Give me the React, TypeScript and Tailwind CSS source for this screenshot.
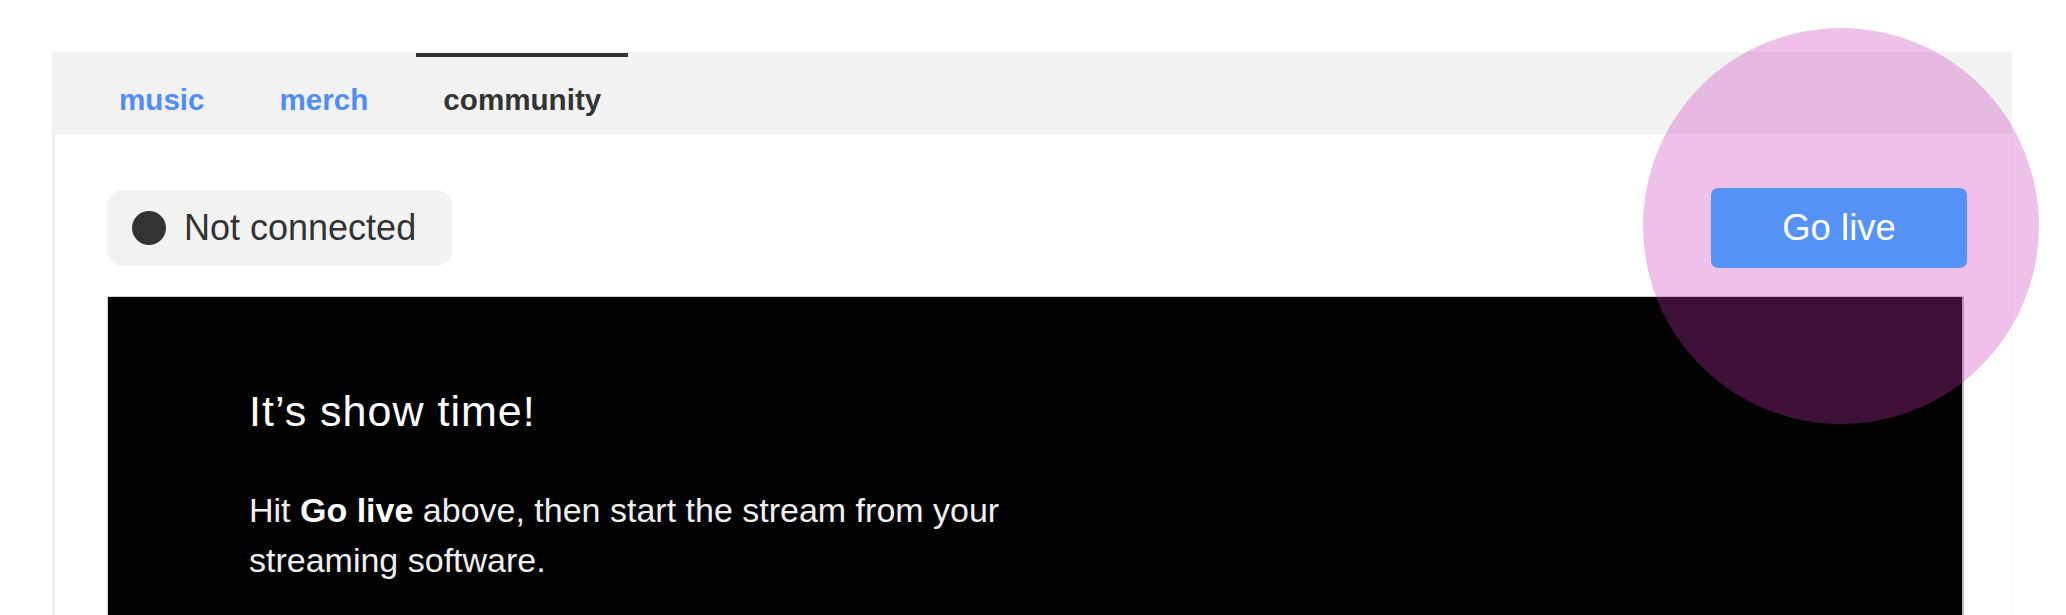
import React from 'react'

const tabs = [
  { label: 'music', active: false },
  { label: 'merch', active: false },
  { label: 'community', active: true },
]

function TabBar() {
  return (
    <div className="flex h-[82px] gap-[21px] bg-[#f2f2f2] pl-[40px]">
      {tabs.map((tab) => (
        <div
          key={tab.label}
          className={`relative px-[27px] pt-[31px] text-[29.6px] font-bold leading-[33px] ${
            tab.active ? 'text-[#333333]' : 'text-[#4f8ef7]'
          }`}
        >
          {tab.active && <div className="absolute left-0 right-0 top-[1px] h-[4px] bg-[#333333]" />}
          {tab.label}
        </div>
      ))}
    </div>
  )
}

function StatusPill() {
  return (
    <div className="flex h-[76px] items-center gap-[18px] rounded-[16px] bg-[#f2f2f2] pl-[25px] pr-[36px]">
      <div className="h-[34px] w-[34px] rounded-full bg-[#333333]" />
      <span className="text-[36px] leading-none text-[#333333]">Not connected</span>
    </div>
  )
}

function GoLiveButton() {
  return (
    <div className="relative">
      {/* highlight ring around the button */}
      <div className="absolute left-[-68px] top-[-160px] z-10 h-[396px] w-[396px] rounded-full bg-[rgba(205,50,180,0.3)]" />
      <button className="relative z-20 flex h-[80px] w-[256px] items-center justify-center rounded-[7px] bg-[#5592f8] text-[36.5px] leading-none text-white">
        Go live
      </button>
    </div>
  )
}

export default function App() {
  return (
    <div className="h-[615px] w-full overflow-hidden bg-white pl-[52px] pr-[54px] pt-[52px] font-['Liberation_Sans',Arial,sans-serif]">
      <TabBar />
      <div className="border-l-[3px] border-r border-l-[#ececec] border-r-[#f4f4f4] pl-[52px] pr-[44px] pt-[54px]">
        <div className="flex h-[80px] items-center justify-between">
          <StatusPill />
          <GoLiveButton />
        </div>

        <div className="mr-[3px] mt-[28px] h-[400px] border border-r-2 border-[#d4d4d4] border-r-[#b8b8b8] bg-[#030303] pl-[141px] pt-[89px]">
          <h2 className="text-[43px] font-normal leading-[50px] tracking-[1px] text-white">It’s show time!</h2>
          <p className="mt-[49px] w-[800px] text-[34px] leading-[50px] text-[#f0f0f0]">
            Hit <b className="font-bold text-white">Go live</b> above, then start the stream from your streaming software.
          </p>
        </div>
      </div>
    </div>
  )
}
